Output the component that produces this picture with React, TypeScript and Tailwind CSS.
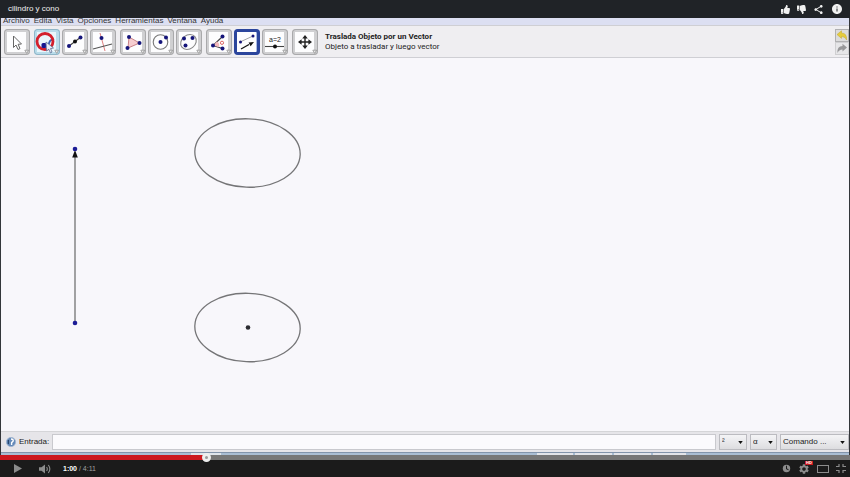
import React, { useState } from 'react';
import { FaThumbsUp, FaThumbsDown } from 'react-icons/fa';
import { MdShare, MdInfo, MdSettings } from 'react-icons/md';

const MENUS = ['Archivo', 'Edita', 'Vista', 'Opciones', 'Herramientas', 'Ventana', 'Ayuda'];

const NAVY = '#15157a';

function Dot({ x, y, r = 2, fill = NAVY }: { x: number; y: number; r?: number; fill?: string }) {
  return <circle cx={x} cy={y} r={r} fill={fill} />;
}

const ICONS: Record<string, React.ReactNode> = {
  Mueve: (
    <path d="M9.5 7 L9.5 18.5 L12 16 L14 20.5 L16 19.6 L14.1 15.3 L17.5 15 Z" fill="#fff" stroke="#666" strokeWidth="1" />
  ),
  Punto: (
    <>
      <path d="M14 19 Q15 9 20 11" fill="none" stroke="#3a62b5" strokeWidth="2" />
      <circle cx="11" cy="12.5" r="8" fill="none" stroke="#d3202c" strokeWidth="2.8" />
      <rect x="7.5" y="14" width="5" height="5" rx="1.5" fill="#15158f" />
      <path d="M12 13 L12.5 22 L14.8 20.2 L16.5 24 L18 23 L16.6 19.6 L19.5 19 Z" fill="#e8edf7" stroke="#5c6f94" strokeWidth=".8" />
    </>
  ),
  Recta: (
    <>
      <path d="M7 17 L19 8" stroke="#444" strokeWidth="1.2" />
      <Dot x={7} y={17} />
      <Dot x={13} y={12.5} fill="#111" />
      <Dot x={18.5} y={8.5} />
    </>
  ),
  Perpendicular: (
    <>
      <path d="M10 4 L15 22" stroke="#e08080" strokeWidth="1" />
      <path d="M3 20 L22 15" stroke="#555" strokeWidth="1.1" />
      <Dot x={11.5} y={9} />
    </>
  ),
  Polígono: (
    <>
      <path d="M9 8 L19.5 14 L8 19 Z" fill="#f6cdd0" stroke="#c98288" strokeWidth="1" />
      <Dot x={9} y={8} />
      <Dot x={19.5} y={14} />
      <Dot x={7.5} y={19} />
    </>
  ),
  Circunferencia: (
    <>
      <circle cx="12.5" cy="13" r="7.3" fill="none" stroke="#777" strokeWidth="1.1" />
      <Dot x={12.5} y={13} />
      <Dot x={18} y={8.5} />
    </>
  ),
  Elipse: (
    <>
      <ellipse cx="12.5" cy="13" rx="8.4" ry="6.8" transform="rotate(-38 12.5 13)" fill="none" stroke="#888" strokeWidth="1.1" />
      <Dot x={8} y={9.5} />
      <Dot x={16.5} y={9} />
      <Dot x={9.5} y={16.5} />
    </>
  ),
  Ángulo: (
    <>
      <path d="M16.5 7.5 L7 16.5 L16.5 19.5" fill="none" stroke="#444" strokeWidth="1.1" />
      <path d="M11 12.5 Q14 14 13 18 L7 16.5 Z" fill="#f3b9bc" />
      <circle cx="16" cy="13.8" r="1.6" fill="none" stroke="#d66" strokeWidth="1" />
      <Dot x={16.5} y={7.5} />
      <Dot x={7} y={16.5} />
      <Dot x={16.5} y={19.5} />
    </>
  ),
  Traslada: (
    <>
      <path d="M6 13 L19 7" stroke="#999" strokeWidth=".9" />
      <path d="M7 20 L15 15.5" stroke="#111" strokeWidth="1.3" />
      <path d="M20 13 L14.6 13.6 L16.6 17.3 Z" fill="#111" />
      <Dot x={6.5} y={13} r={1.5} />
      <Dot x={19} y={7} r={1.5} />
    </>
  ),
  Deslizador: (
    <>
      <text x="7" y="13" fontSize="7" fill="#222">a=2</text>
      <path d="M3 17.5 H22" stroke="#444" strokeWidth="1.1" />
      <Dot x={13} y={17.5} fill="#111" />
    </>
  ),
  Desplaza: (
    <>
      <path d="M13 8 V18 M8 13 H18" stroke="#222" strokeWidth="1.4" />
      <path d="M13 6 L15.8 9.6 H10.2 Z M13 20 L15.8 16.4 H10.2 Z M6 13 L9.6 10.2 V15.8 Z M20 13 L16.4 10.2 V15.8 Z" fill="#222" />
    </>
  ),
};

const GROUPS = [
  ['Mueve'],
  ['Punto', 'Recta', 'Perpendicular'],
  ['Polígono', 'Circunferencia', 'Elipse'],
  ['Ángulo', 'Traslada', 'Deslizador'],
  ['Desplaza'],
];

function frameClass(name: string) {
  if (name === 'Traslada') return 'inset-ring-3 inset-ring-[#2b459c] bg-[#a9bbe6]';
  if (name === 'Punto') return 'inset-ring inset-ring-[#8fb6c8] bg-[#b9dcea]';
  return 'inset-ring inset-ring-[#a9a9ab] bg-[#d0d0d2]';
}

function ToolButton({ name }: { name: string }) {
  return (
    <button aria-label={name} className={`size-[26px] rounded-sm ${frameClass(name)}`}>
      <svg viewBox="0 0 26 26" className="size-[26px]">
        <rect x="3" y="3" width="19" height="20" fill={name === 'Punto' ? '#e9f6fb' : '#fdfdfe'} />
        {ICONS[name]}
        {name !== 'Traslada' && <path d="M20.8 21.2 H24.6 L22.7 24.4 Z" fill="#eee" stroke="#888" strokeWidth=".7" />}
      </svg>
    </button>
  );
}

function Header() {
  return (
    <header className="flex h-[18px] items-center justify-between bg-[#202327] pl-2 pr-[7px] text-[#f0f0f0]">
      <h1 className="text-[8px] leading-3">cilindro y cono</h1>
      <div className="flex items-center gap-[7px]">
        <button aria-label="Me gusta"><FaThumbsUp size={9} /></button>
        <button aria-label="No me gusta"><FaThumbsDown size={9} /></button>
        <button aria-label="Compartir"><MdShare size={11} /></button>
        <button aria-label="Información"><MdInfo size={12} /></button>
      </div>
    </header>
  );
}

function Toolbar() {
  return (
    <div className="flex items-center border-y border-[#cfcfd4] bg-[#efeef1] pb-[2px] pl-[3px] pt-[3px]">
      <div className="flex gap-1">
        {GROUPS.map((group) => (
          <div key={group[0]} className="flex gap-[2px]">
            {group.map((name) => (
              <ToolButton key={name} name={name} />
            ))}
          </div>
        ))}
      </div>
      <div className="ml-[7px] flex-1 [font-family:Roboto,sans-serif] text-[8px] leading-[10px] text-[#222]">
        <p className="font-bold">Traslada Objeto por un Vector</p>
        <p>Objeto a trasladar y luego vector</p>
      </div>
      <div className="flex flex-col">
        <button aria-label="Deshacer" className="border border-[#b0b0b2] bg-[#dcdcdc]">
          <svg viewBox="0 0 12 11" className="h-[11px] w-3">
            <path d="M1 4.5 L5.5 .8 V3 Q11 3 10.6 10 Q9 6.4 5.5 6.4 V8.4 Z" fill="#e5cc3c" stroke="#c4a92b" strokeWidth=".5" />
          </svg>
        </button>
        <button aria-label="Rehacer" className="border border-[#cfcfd1] bg-[#e6e6e8]">
          <svg viewBox="0 0 12 11" className="h-[11px] w-3">
            <path d="M11 4.5 L6.5 .8 V3 Q1 3 1.4 10 Q3 6.4 6.5 6.4 V8.4 Z" fill="#98989a" />
          </svg>
        </button>
      </div>
    </div>
  );
}

function Drawing() {
  return (
    <svg className="h-[373px] w-full flex-1 bg-[#f8f7fb]">
      <path d="M74 265 V99" stroke="#8b8b8d" strokeWidth="1.6" />
      <path d="M74 92 L76.8 99.5 H71.2 Z" fill="#111" />
      <circle cx="74" cy="91" r="2.3" fill="#1c1c96" />
      <circle cx="74" cy="265" r="2.3" fill="#1c1c96" />
      <ellipse cx="246.5" cy="95" rx="52.7" ry="34.2" transform="rotate(2 246.5 95)" fill="none" stroke="#757577" strokeWidth="1.3" />
      <ellipse cx="246.5" cy="269.5" rx="52.7" ry="34.2" transform="rotate(2 246.5 269.5)" fill="none" stroke="#757577" strokeWidth="1.3" />
      <circle cx="247" cy="269.5" r="2.3" fill="#2b2b30" />
    </svg>
  );
}

function Picker({ label, value, width }: { label: string; value: string; width: string }) {
  return (
    <div className={`relative ${width}`}>
      <select
        aria-label={label}
        className="block h-4 w-full appearance-none border border-[#bbbbc0] bg-linear-to-b from-[#f4f4f6] to-[#dddde0] pl-[2px] text-[8px] leading-3 text-[#222]"
      >
        <option>{value}</option>
      </select>
      <svg viewBox="0 0 6 4" className="pointer-events-none absolute right-1 top-[7px] h-[3px] w-[5px]">
        <path d="M0 0 H6 L3 4 Z" fill="#111" />
      </svg>
    </div>
  );
}

function InputBar() {
  return (
    <div className="flex h-[21px] items-center gap-[3px] border-t border-[#d5d5d8] bg-[#e6e5e9] pl-[5px]">
      <button aria-label="Ayuda de entrada">
        <svg viewBox="0 0 10 10" className="size-[10px]">
          <circle cx="5" cy="5" r="4.6" fill="#6389b8" stroke="#9db3cf" strokeWidth=".8" />
          <path d="M5 2 Q8 2.2 7 4.4 L5.6 5.6 V8" fill="none" stroke="#fff" strokeWidth="1.4" />
          <path d="M2.4 3 V7" stroke="#28466f" strokeWidth="1.2" />
        </svg>
      </button>
      <label htmlFor="entrada" className="w-[30px] text-[8px] leading-3 text-[#222]">Entrada:</label>
      <input id="entrada" className="h-4 min-w-0 flex-1 border border-[#c9c9ce] bg-[#fbfafd] px-1 text-[8px]" />
      <Picker label="Exponente" value="²" width="w-[28px]" />
      <Picker label="Símbolo" value="α" width="w-[27px]" />
      <Picker label="Comando" value="Comando ..." width="w-[69px]" />
    </div>
  );
}

function Taskbar() {
  return (
    <div className="flex h-[3px] gap-[2px] border-t border-[#8294ab] bg-[#a9bdd3] pl-[190px]">
      <span className="w-[30px] bg-[#dfe5ec]" />
      <span className="w-[312px]" />
      <span className="w-[36px] bg-[#e2e4e9]" />
      <span className="w-[37px] bg-[#e2e4e9]" />
      <span className="w-[37px] bg-[#e2e4e9]" />
      <span className="w-[33px] bg-[#e2e4e9]" />
    </div>
  );
}

function Player() {
  const [position, setPosition] = useState(24);
  return (
    <footer className="bg-[#1b1b1b]">
      <input
        type="range"
        aria-label="Progreso"
        value={position}
        onChange={(e) => setPosition(Number(e.target.value))}
        style={{ backgroundImage: `linear-gradient(to right, #cc181e ${position}%, #777777 ${position}%)` }}
        className="relative block h-[5px] w-full appearance-none [&::-webkit-slider-thumb]:size-[9px] [&::-webkit-slider-thumb]:appearance-none [&::-webkit-slider-thumb]:rounded-full [&::-webkit-slider-thumb]:border-[3px] [&::-webkit-slider-thumb]:border-[#eeeeee] [&::-webkit-slider-thumb]:bg-[#999999]"
      />
      <div className="flex h-[17px] items-center text-[#8c8c8c]">
        <button aria-label="Reproducir" className="ml-[14px]">
          <svg viewBox="0 0 8 9" className="h-[9px] w-2"><path d="M0 0 L8 4.5 L0 9 Z" fill="currentColor" /></svg>
        </button>
        <button aria-label="Volumen" className="ml-[17px]">
          <svg viewBox="0 0 12 10" className="h-[10px] w-3">
            <path d="M0 3.2 H2.5 L6 .5 V9.5 L2.5 6.8 H0 Z" fill="currentColor" />
            <path d="M7.6 3 Q9 5 7.6 7 M9.3 1 Q12.4 5 9.3 9" fill="none" stroke="currentColor" strokeWidth="1.1" />
          </svg>
        </button>
        <p className="ml-3 flex-1 text-[7px] leading-3 text-[#a0a0a0]">
          <b className="text-white">1:00</b> / 4:11
        </p>
        <div className="flex items-center gap-[7px] pr-1">
          <button aria-label="Ver más tarde">
            <svg viewBox="0 0 8 8" className="size-[9px]">
              <circle cx="4" cy="4" r="3.3" fill="currentColor" />
              <path d="M4 1.6 V4.2 L5.8 5.2" fill="none" stroke="#1b1b1b" strokeWidth=".9" />
            </svg>
          </button>
          <button aria-label="Configuración" className="relative">
            <MdSettings size={12} />
            <span className="absolute -top-[2px] left-[7px] h-1 w-2 bg-[#cc181e] text-center text-[4px] font-bold leading-1 text-white">HD</span>
          </button>
          <button aria-label="Modo cine"><span className="block h-2 w-3 border border-current" /></button>
          <button aria-label="Salir de pantalla completa">
            <svg viewBox="0 0 10 9" className="h-[9px] w-[10px]">
              <path d="M3 0 V2.5 H0 M7 0 V2.5 H10 M0 6.5 H3 V9 M10 6.5 H7 V9" fill="none" stroke="currentColor" strokeWidth="1.2" />
            </svg>
          </button>
        </div>
      </div>
    </footer>
  );
}

export default function App() {
  return (
    <div className="flex min-h-screen flex-col bg-[#1b1b1b] font-['Liberation_Sans',Arial,sans-serif]">
      <Header />
      <main className="flex flex-1 flex-col border-x border-[#33363a]">
        <nav className="flex h-[7px] items-end gap-1 bg-[#dcdff2] pl-[2px] text-[8px] leading-[8px] text-[#333]">
          {MENUS.map((menu) => (
            <a key={menu} href="#">{menu}</a>
          ))}
        </nav>
        <Toolbar />
        <Drawing />
        <InputBar />
        <Taskbar />
      </main>
      <Player />
    </div>
  );
}
